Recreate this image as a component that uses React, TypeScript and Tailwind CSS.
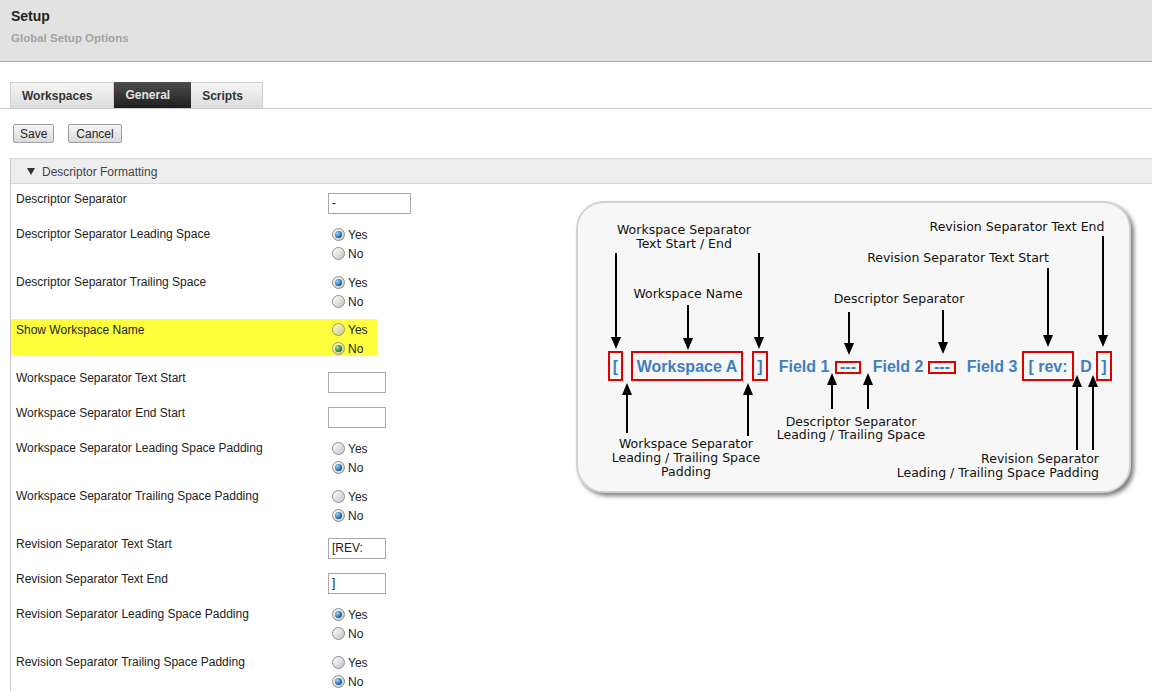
import React from "react";

function Radio({ checked, hl }: { checked?: boolean; hl?: boolean }) {
  return (
    <span
      className={
        "inline-flex w-[13px] h-[13px] rounded-full border items-center justify-center shrink-0 " +
        (hl
          ? "border-[#9a9a60] bg-[linear-gradient(135deg,#ffffd8,#c9c98a)]"
          : "border-[#8c8c8c] bg-[linear-gradient(135deg,#ffffff,#c4c4c4)]")
      }
    >
      {checked && (
        <span
          className={
            "w-[7px] h-[7px] rounded-full " +
            (hl
              ? "bg-[radial-gradient(circle_at_35%_35%,#9be39b,#1d6b32_70%)]"
              : "bg-[radial-gradient(circle_at_35%_35%,#9ad6ff,#0f5a96_70%)]")
          }
        />
      )}
    </span>
  );
}

function RadioPair({ yes, hl }: { yes: boolean; hl?: boolean }) {
  return (
    <div className="flex flex-col">
      <label className="flex items-center h-[19px] ml-[4px] gap-[3px]">
        <Radio checked={yes} hl={hl} />
        <span>Yes</span>
      </label>
      <label className="flex items-center h-[19px] ml-[4px] gap-[3px]">
        <Radio checked={!yes} hl={hl} />
        <span>No</span>
      </label>
    </div>
  );
}

function InputRow({ label, value, wide }: { label: string; value: string; wide?: boolean }) {
  return (
    <div className="flex h-[35px]">
      <div className="w-[317px] pl-[5px] pt-[7px] leading-[16px]">{label}</div>
      <div
        className={
          "mt-[9px] h-[21px] border border-[#a9a9a9] bg-white pl-[3px] leading-[19px] " +
          (wide ? "w-[83px]" : "w-[58px]")
        }
      >
        {value}
      </div>
    </div>
  );
}

function RadioRow({ label, yes }: { label: string; yes: boolean }) {
  return (
    <div className="flex h-[48px]">
      <div className="w-[317px] pl-[5px] pt-[7px] leading-[16px]">{label}</div>
      <div className="pt-[6px]">
        <RadioPair yes={yes} />
      </div>
    </div>
  );
}

function HighlightRow({ label, yes }: { label: string; yes: boolean }) {
  return (
    <div className="h-[48px] pt-[4px]">
      <div className="flex h-[37px] w-[366px] bg-[#ffff3e]">
        <div className="w-[317px] pl-[5px] pt-[3px] leading-[16px]">{label}</div>
        <div className="pt-[1px]">
          <RadioPair yes={yes} hl />
        </div>
      </div>
    </div>
  );
}

function Down({ x, y1, tip }: { x: number; y1: number; tip: number }) {
  return (
    <g>
      <line x1={x} y1={y1} x2={x} y2={tip - 8} stroke="#000" strokeWidth={2} />
      <polygon points={`${x - 5},${tip - 12} ${x + 5},${tip - 12} ${x},${tip}`} fill="#000" />
    </g>
  );
}

function Up({ x, tip, y2 }: { x: number; tip: number; y2: number }) {
  return (
    <g>
      <line x1={x} y1={tip + 8} x2={x} y2={y2} stroke="#000" strokeWidth={2} />
      <polygon points={`${x - 5},${tip + 12} ${x + 5},${tip + 12} ${x},${tip}`} fill="#000" />
    </g>
  );
}

function Diagram() {
  return (
    <div className="relative mt-[17px] w-[555px] h-[292px] rounded-[28px] border-2 border-[#d2d2d2] bg-[#f7f7f7] shadow-[3px_3px_4px_rgba(0,0,0,0.5)]">
      <svg className="absolute left-[-2px] top-[-2px]" width={555} height={292} viewBox="0 0 555 292">
        <g
          textAnchor="middle"
          dominantBaseline="central"
          className="fill-[#111] text-[12.5px] font-['DejaVu_Sans',Verdana,sans-serif]"
        >
          <text x={108} y={28}>Workspace Separator</text>
          <text x={108} y={42}>Text Start / End</text>
          <text x={112} y={92}>Workspace Name</text>
          <text x={323} y={97}>Descriptor Separator</text>
          <text x={382} y={56}>Revision Separator Text Start</text>
          <text x={441} y={25}>Revision Separator Text End</text>

          <text x={110} y={242}>Workspace Separator</text>
          <text x={110} y={256}>Leading / Trailing Space</text>
          <text x={110} y={270}>Padding</text>
          <text x={275} y={220}>Descriptor Separator</text>
          <text x={275} y={233}>Leading / Trailing Space</text>
        </g>
        <g
          textAnchor="end"
          dominantBaseline="central"
          className="fill-[#111] text-[12.5px] font-['DejaVu_Sans',Verdana,sans-serif]"
        >
          <text x={523} y={257}>Revision Separator</text>
          <text x={523} y={271}>Leading / Trailing Space Padding</text>
        </g>

        <Down x={40} y1={52} tip={148} />
        <Down x={112} y1={104} tip={149} />
        <Down x={183} y1={52} tip={148} />
        <Down x={273} y1={111} tip={154} />
        <Down x={367} y1={109} tip={153} />
        <Down x={472} y1={67} tip={146} />
        <Down x={527} y1={35} tip={146} />

        <g fill="none" stroke="#e00000" strokeWidth={2}>
          <rect x={33} y={151} width={13} height={28} />
          <rect x={56} y={151} width={110} height={28} />
          <rect x={177} y={151} width={14} height={28} />
          <rect x={260} y={161} width={24} height={11} />
          <rect x={353} y={161} width={26} height={11} />
          <rect x={447} y={151} width={50} height={28} />
          <rect x={521} y={151} width={14} height={28} />
        </g>

        <g
          textAnchor="middle"
          className="fill-[#3f7fc0] text-[16px] font-bold font-['Liberation_Sans',Arial,sans-serif]"
        >
          <text x={39.5} y={171}>[</text>
          <text x={111} y={171}>Workspace A</text>
          <text x={184} y={171}>]</text>
          <text x={228} y={171}>Field 1</text>
          <text x={272} y={171}>---</text>
          <text x={322} y={171}>Field 2</text>
          <text x={366} y={171}>---</text>
          <text x={416} y={171}>Field 3</text>
          <text x={472} y={171}>[ rev:</text>
          <text x={510} y={171}>D</text>
          <text x={528} y={171}>]</text>
        </g>

        <Up x={51} tip={182} y2={232} />
        <Up x={172} tip={182} y2={235} />
        <Up x={256} tip={172} y2={208} />
        <Up x={292} tip={172} y2={208} />
        <Up x={501} tip={174} y2={249} />
        <Up x={517} tip={174} y2={249} />
      </svg>
    </div>
  );
}

export default function App() {
  return (
    <div className="w-[1152px] h-[691px] overflow-hidden bg-white font-['Liberation_Sans',Arial,sans-serif] text-[12px] text-[#222]">
      <header className="h-[62px] bg-[#e2e2e2] border-b border-[#aaaaaa] pl-[11px] pt-[7px]">
        <div className="text-[14px] font-bold leading-[18px] text-[#222]">Setup</div>
        <div className="mt-[6px] text-[11.5px] font-bold leading-[14px] text-[#a3a3a3]">Global Setup Options</div>
      </header>

      <div className="mt-[20px] px-[10px] flex border-b border-[#cccccc]">
        <div className="h-[26px] pl-[11px] pr-[21px] flex items-center font-bold text-[#333] border border-b-0 border-[#cfcfcf] bg-[linear-gradient(#f6f6f6,#dcdcdc)]">
          Workspaces
        </div>
        <div className="h-[26px] pl-[11px] pr-[21px] flex items-center font-bold text-[#e4e4e4] bg-[linear-gradient(#4d4d4d,#1f1f1f)]">
          General
        </div>
        <div className="h-[26px] pl-[11px] pr-[19px] flex items-center font-bold text-[#333] border border-b-0 border-l-0 border-[#cfcfcf] bg-[linear-gradient(#f6f6f6,#dcdcdc)]">
          Scripts
        </div>
      </div>

      <div className="mt-[15px] pl-[13px] flex gap-[14px]">
        <button className="h-[19px] px-[6px] pt-[1px] leading-[17px] border border-[#9e9e9e] rounded-[2px] bg-[linear-gradient(#f6f6f6,#dadada)] text-[#222]">
          Save
        </button>
        <button className="h-[19px] px-[7px] pt-[1px] leading-[17px] border border-[#9e9e9e] rounded-[2px] bg-[linear-gradient(#f6f6f6,#dadada)] text-[#222]">
          Cancel
        </button>
      </div>

      <section className="mt-[15px] ml-[10px] border-l border-[#c8c8c8] h-[600px]">
        <div className="h-[26px] border-y border-[#d9d9d9] bg-[#eeeeee] flex items-center pt-[1px] pl-[16px] gap-[7px] text-[#444]">
          <svg width="8" height="7" viewBox="0 0 8 7">
            <polygon points="0,0 8,0 4,7" fill="#333" />
          </svg>
          <span>Descriptor Formatting</span>
        </div>
        <div className="flex">
          <div className="w-[565px]">
            <InputRow label="Descriptor Separator" value="-" wide />
            <RadioRow label="Descriptor Separator Leading Space" yes />
            <RadioRow label="Descriptor Separator Trailing Space" yes />
            <HighlightRow label="Show Workspace Name" yes={false} />
            <InputRow label="Workspace Separator Text Start" value="" />
            <InputRow label="Workspace Separator End Start" value="" />
            <RadioRow label="Workspace Separator Leading Space Padding" yes={false} />
            <RadioRow label="Workspace Separator Trailing Space Padding" yes={false} />
            <InputRow label="Revision Separator Text Start" value="[REV:" />
            <InputRow label="Revision Separator Text End" value="]" />
            <RadioRow label="Revision Separator Leading Space Padding" yes />
            <RadioRow label="Revision Separator Trailing Space Padding" yes={false} />
          </div>
          <Diagram />
        </div>
      </section>
    </div>
  );
}
